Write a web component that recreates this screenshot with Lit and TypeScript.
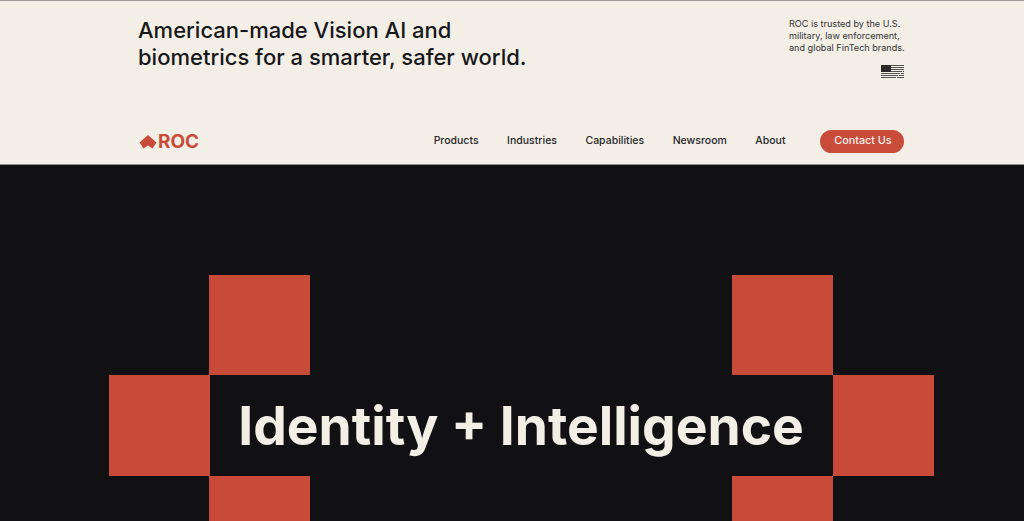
import { LitElement, html, css, svg } from "lit";
import { customElement } from "lit/decorators.js";

const stripes = [0, 2, 4, 6, 8, 10, 12];

@customElement("app-root")
export class AppRoot extends LitElement {
  static styles = css`
    :host { display: block; width: 1024px; height: 521px; overflow: hidden; font-family: Inter, "Liberation Sans", sans-serif; }
    .head { background: #f3efe7; height: 165px; border-top: 1px solid #9b9a96; border-bottom: 1px solid #8e8d8a; box-sizing: border-box; padding: 0 120px 0 138px; display: flex; flex-direction: column; }
    .top { display: flex; justify-content: space-between; height: 123px; padding-top: 16px; box-sizing: border-box; }
    h1 { margin: 0; font-size: 22px; line-height: 27px; font-weight: 500; color: #17171a; }
    .trust { display: flex; flex-direction: column; align-items: flex-end; padding-top: 1px; }
    .trust p { margin: 0; font-size: 9.1px; line-height: 12px; color: #333; width: 115px; white-space: nowrap; }
    .flag { display: block; margin-top: 11px; }
    .nav { display: flex; align-items: center; justify-content: space-between; height: 35px; }
    .logo { display: flex; align-items: center; gap: 1px; padding-left: 1px; color: #c94c3b; font-size: 19px; font-weight: 700; }
    .logo svg { display: block; }
    .links { display: flex; align-items: center; gap: 28.5px; font-size: 10.5px; font-weight: 500; color: #26262a; }
    .links > span { padding-bottom: 2px; }
    .links > .cta { background: #c94c3b; color: #f3efe7; border-radius: 12px; height: 23px; width: 84px; box-sizing: border-box; padding: 0 0 2px 2px; display: flex; align-items: center; justify-content: center; margin-left: 6px; font-size: 10.8px; }
    .hero { background: #111114; height: 356px; box-sizing: border-box; padding: 110px 0 0 109px; display: grid; grid-template-columns: 100px 101px 422px 101px 101px; grid-template-rows: 100px 101px 100px; width: 1024px; }
    .sq { background: #c84b3a; }
    .a { grid-column: 2; grid-row: 1; }
    .b { grid-column: 1; grid-row: 2; margin-right: -1px; }
    .c { grid-column: 2; grid-row: 3; }
    .d { grid-column: 4; grid-row: 1; }
    .e { grid-column: 5; grid-row: 2; }
    .f { grid-column: 4; grid-row: 3; }
    h2 { grid-column: 2 / 5; grid-row: 2; margin: 0; justify-self: center; align-self: center; white-space: nowrap; font-size: 53.3px; font-weight: 700; color: #f3efe7; }
  `;

  render() {
    return html`
      <header class="head">
        <div class="top">
          <h1>American-made Vision AI and<br />biometrics for a smarter, safer world.</h1>
          <div class="trust">
            <p>ROC is trusted by the U.S.<br />military, law enforcement,<br />and global FinTech brands.</p>
            <svg class="flag" width="23" height="13" viewBox="0 0 23 13">
              <rect width="23" height="13" fill="#f3efe7"></rect>
              ${stripes.map((y) => svg`<rect y="${y}" width="23" height="1" fill="#555"></rect>`)}
              <rect width="10" height="7" fill="#2a2a2a"></rect>
              <path d="M15 13 23 5" stroke="#f3efe7" stroke-width="1" fill="none"></path>
            </svg>
          </div>
        </div>
        <nav class="nav">
          <div class="logo">
            <svg width="18" height="14" viewBox="0 0 18 14"><path d="M9 0 17.5 7.5 13.5 13.5 9 10.5 4.5 13.5 0.5 7.5Z" fill="currentColor"></path></svg>
            <span>ROC</span>
          </div>
          <div class="links">
            <span>Products</span><span>Industries</span><span>Capabilities</span><span>Newsroom</span><span>About</span>
            <span class="cta">Contact Us</span>
          </div>
        </nav>
      </header>
      <section class="hero">
        <div class="sq a"></div><div class="sq b"></div><div class="sq c"></div>
        <div class="sq d"></div><div class="sq e"></div><div class="sq f"></div>
        <h2>Identity + Intelligence</h2>
      </section>
    `;
  }
}
